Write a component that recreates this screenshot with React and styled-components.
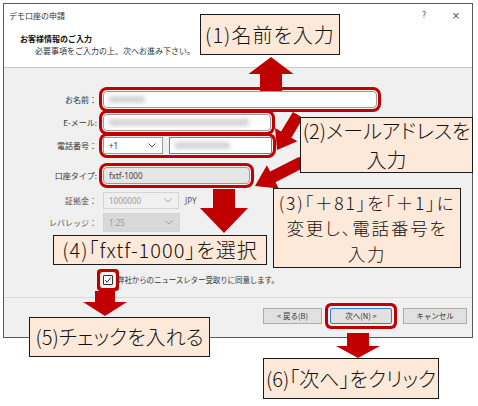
import React from 'react';
import styled, { createGlobalStyle, css } from 'styled-components';

const Global = createGlobalStyle`
    html, body {
        margin: 0;
        padding: 0;
        background: #ffffff;
    }
    body {
        font-family: "Noto Sans CJK JP", "Noto Sans", sans-serif;
        color: #222;
    }
`;

const RED = '#c00000';

const Page = styled.div`
    position: relative;
    width: 478px;
    height: 406px;
    overflow: hidden;
    padding: 3px 0 0 3px;
    box-sizing: border-box;
`;

const Dialog = styled.div`
    width: 470px;
    height: 335px;
    border: 1px solid #5a5a5a;
    box-sizing: border-box;
    display: flex;
    flex-direction: column;
    background: #f0f0f0;
    font-size: 8px;
    line-height: 12px;
`;

const Header = styled.div`
    background: #ffffff;
    height: 64px;
    border-bottom: 1px solid #c8c8c8;
    padding: 6px 0 0 5px;
    box-sizing: border-box;
`;

const TitleRow = styled.div`
    display: flex;
    align-items: center;
    height: 12px;
    color: #333;
`;

const Title = styled.span`
    flex: 1;
`;

const WinButton = styled.span`
    width: 32px;
    text-align: center;
    color: #555;
    font-family: "DejaVu Sans", sans-serif;
    font-size: ${p => p.$size || 9}px;
`;

const Heading = styled.div`
    margin: 11px 0 0 11px;
    font-weight: 700;
    color: #111;
`;

const SubHeading = styled.div`
    margin-left: 26px;
    color: #333;
`;

const Body = styled.div`
    flex: 1;
    padding-top: 20px;
    display: flex;
    flex-direction: column;
`;

const Row = styled.div`
    display: grid;
    grid-template-columns: 93px 1fr;
    column-gap: 6px;
    align-items: center;
    height: ${p => p.$h || 23}px;
    margin-top: ${p => p.$mt || 0}px;
`;

const Label = styled.span`
    text-align: right;
    color: ${p => (p.$muted ? '#555' : '#333')};
    white-space: nowrap;
`;

const Field = styled.div`
    display: flex;
    align-items: center;
    gap: 6px;
`;

const ring = css`
    box-shadow: 0 0 0 1px #f0f0f0, 0 0 0 4px ${RED};
    border-radius: 4px;
`;

const Group = styled.div`
    display: flex;
    align-items: center;
    gap: 6px;
    border-radius: 3px;
    ${p => p.$mark && ring}
`;

const Input = styled.div`
    width: ${p => p.$w}px;
    height: 17px;
    box-sizing: border-box;
    border: 1px solid ${p => (p.$focus ? '#3c8ad8' : '#9a9a9a')};
    background: ${p => (p.$disabled ? '#e6e6e6' : '#ffffff')};
    display: flex;
    align-items: center;
    padding: 0 5px;
    color: #444;
    font-family: "Noto Sans", sans-serif;
    ${p => p.$mark && ring}
`;

const Blur = styled.span`
    display: inline-block;
    width: ${p => p.$w}px;
    height: 7px;
    background: #c9c9c9;
    filter: blur(2px);
    opacity: 0.8;
`;

const Select = styled.div`
    width: ${p => p.$w}px;
    height: ${p => p.$h || 17}px;
    box-sizing: border-box;
    border: 1px solid ${p => (p.$disabled ? '#d4d4d4' : '#9a9a9a')};
    background: ${p => p.$fill || '#ffffff'};
    display: flex;
    align-items: center;
    justify-content: space-between;
    padding: 0 6px 0 5px;
    color: ${p => (p.$disabled ? '#9a9a9a' : '#333')};
    font-family: "Noto Sans", sans-serif;
`;

const Chevron = () => (
    <svg width="8" height="5" viewBox="0 0 8 5">
        <path d="M0.5 0.5 L4 4 L7.5 0.5" fill="none" stroke="currentColor" strokeWidth="0.9" />
    </svg>
);

const Unit = styled.span`
    color: #555;
    font-family: "Noto Sans", sans-serif;
`;

const CheckRow = styled.div`
    display: flex;
    align-items: center;
    gap: 4px;
    height: 20px;
    margin: 37px 0 0 99px;
    color: #333;
    font-size: 7.5px;
    letter-spacing: -0.1px;
`;

const CheckBox = styled.span`
    width: 10px;
    height: 10px;
    box-sizing: border-box;
    border: 1px solid #333;
    background: #fff;
    display: inline-flex;
    align-items: center;
    justify-content: center;
    box-shadow: 0 0 0 3px #f0f0f0, 0 0 0 6px ${RED};
    border-radius: 1px;
`;

const Footer = styled.div`
    border-top: 1px solid #dadada;
    height: 40px;
    box-sizing: border-box;
    display: flex;
    justify-content: flex-end;
    align-items: flex-start;
    padding: 10px 5px 0 0;
`;

const Button = styled.div`
    width: ${p => p.$w}px;
    height: 16px;
    box-sizing: border-box;
    border: 1px solid ${p => (p.$primary ? '#2f7fd0' : '#adadad')};
    background: #e1e1e1;
    display: flex;
    align-items: center;
    justify-content: center;
    margin-left: ${p => p.$ml || 0}px;
    color: #333;
    font-size: 7.5px;
    ${p => p.$mark && css`
        box-shadow: 0 0 0 2px #f0f0f0, 0 0 0 5px ${RED};
        border-radius: 2px;
    `}
`;

const Callout = styled.div`
    position: absolute;
    left: ${p => p.$x}px;
    top: ${p => p.$y}px;
    width: ${p => p.$w}px;
    height: ${p => p.$h}px;
    box-sizing: border-box;
    border: 1px solid #1a1a1a;
    background: #fde9d9;
    display: flex;
    flex-direction: column;
    align-items: center;
    justify-content: center;
    font-family: "Noto Sans CJK JP", sans-serif;
    font-weight: 300;
    font-size: ${p => p.$fs || 19}px;
    line-height: ${p => p.$lh || 24}px;
    color: #111;
    white-space: nowrap;
    letter-spacing: ${p => p.$ls || 0}px;
    font-feature-settings: "palt";
`;

const Overlay = styled.svg`
    position: absolute;
    left: 0;
    top: 0;
    pointer-events: none;
`;

// arrow polygon from tail to tip
const arrow = (x1, y1, x2, y2, sw, hw, hl) => {
    const dx = x2 - x1;
    const dy = y2 - y1;
    const len = Math.hypot(dx, dy);
    const ux = dx / len;
    const uy = dy / len;
    const nx = -uy;
    const ny = ux;
    const bx = x2 - ux * hl;
    const by = y2 - uy * hl;
    const pts = [
        [x1 + (nx * sw) / 2, y1 + (ny * sw) / 2],
        [bx + (nx * sw) / 2, by + (ny * sw) / 2],
        [bx + (nx * hw) / 2, by + (ny * hw) / 2],
        [x2, y2],
        [bx - (nx * hw) / 2, by - (ny * hw) / 2],
        [bx - (nx * sw) / 2, by - (ny * sw) / 2],
        [x1 - (nx * sw) / 2, y1 - (ny * sw) / 2]
    ];
    return pts.map(p => p.map(v => v.toFixed(1)).join(',')).join(' ');
};

const arrows = [
    [271, 91, 271, 57, 22, 45, 17],
    [298, 115, 277, 150, 12, 26, 18],
    [302, 162, 255, 186, 12, 26, 20],
    [224, 189, 224, 233, 22, 48, 25],
    [105, 291, 105, 316, 20, 44, 14],
    [358, 333, 358, 358, 22, 44, 12]
];

const App = () => (
    <Page>
        <Global />
        <Dialog>
            <Header>
                <TitleRow>
                    <Title>デモ口座の申請</Title>
                    <WinButton $size={8}>?</WinButton>
                    <WinButton $size={10}>×</WinButton>
                </TitleRow>
                <Heading>お客様情報のご入力</Heading>
                <SubHeading>必要事項をご入力の上、次へお進み下さい。</SubHeading>
            </Header>
            <Body>
                <Row>
                    <Label>お名前：</Label>
                    <Field>
                        <Input $w={274} $mark>
                            <Blur $w={36} />
                        </Input>
                    </Field>
                </Row>
                <Row>
                    <Label>E-メール:</Label>
                    <Field>
                        <Input $w={168} $mark>
                            <Blur $w={140} />
                        </Input>
                    </Field>
                </Row>
                <Row>
                    <Label>電話番号：</Label>
                    <Field>
                        <Group $mark>
                            <Select $w={60}>
                                <span>+1</span>
                                <Chevron />
                            </Select>
                            <Input $w={103} $focus>
                                <Blur $w={55} />
                            </Input>
                        </Group>
                    </Field>
                </Row>
                <Row $mt={7}>
                    <Label>口座タイプ:</Label>
                    <Field>
                        <Input $w={147} $disabled $mark>
                            fxtf-1000
                        </Input>
                    </Field>
                </Row>
                <Row $mt={2}>
                    <Label $muted>証拠金：</Label>
                    <Field>
                        <Select $w={76} $disabled $fill="#f0f0f0">
                            <span>1000000</span>
                            <Chevron />
                        </Select>
                        <Unit>JPY</Unit>
                    </Field>
                </Row>
                <Row $h={21}>
                    <Label $muted>レバレッジ：</Label>
                    <Field>
                        <Select $w={77} $h={19} $disabled $fill="#d9d9d9">
                            <span>1:25</span>
                            <Chevron />
                        </Select>
                    </Field>
                </Row>
                <CheckRow>
                    <CheckBox>
                        <svg width="8" height="8" viewBox="0 0 8 8">
                            <path d="M1.2 4.2 L3.2 6.2 L6.9 1.6" fill="none" stroke="#222" strokeWidth="1" />
                        </svg>
                    </CheckBox>
                    <span>弊社からのニュースレター受取りに同意します。</span>
                </CheckRow>
            </Body>
            <Footer>
                <Button $w={59}>&lt; 戻る(B)</Button>
                <Button $w={62} $ml={8} $primary $mark>
                    次へ(N) &gt;
                </Button>
                <Button $w={64} $ml={11}>
                    キャンセル
                </Button>
            </Footer>
        </Dialog>

        <Overlay width="478" height="406" viewBox="0 0 478 406">
            {arrows.map((a, i) => (
                <polygon key={i} points={arrow(...a)} fill={RED} />
            ))}
        </Overlay>

        <Callout $x={200} $y={14} $w={140} $h={41} $fs={20} $ls={1}>
            (1)名前を入力
        </Callout>
        <Callout $x={300} $y={117} $w={173} $h={56} $fs={20} $lh={29}>
            <span>(2)メールアドレスを</span>
            <span>入力</span>
        </Callout>
        <Callout $x={273} $y={188} $w={188} $h={80} $fs={17.5} $lh={25.5} $ls={1.8}>
            <span>(3)「＋81」を「＋1」に</span>
            <span>変更し、電話番号を</span>
            <span>入力</span>
        </Callout>
        <Callout $x={53} $y={235} $w={214} $h={30} $fs={20} $ls={1}>
            (4)「fxtf-1000」を選択
        </Callout>
        <Callout $x={29} $y={317} $w={181} $h={40} $fs={20}>
            (5)チェックを入れる
        </Callout>
        <Callout $x={263} $y={358} $w={176} $h={41} $fs={20}>
            (6)「次へ」をクリック
        </Callout>
    </Page>
);

export default App;
